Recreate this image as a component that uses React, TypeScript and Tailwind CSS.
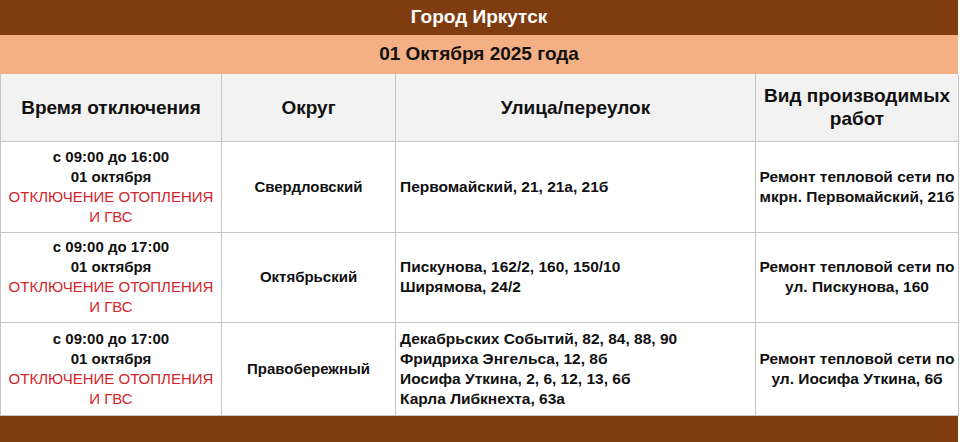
import React from 'react'

const rows = [
  {
    time: 'с 09:00 до 16:00',
    district: 'Свердловский',
    streets: ['Первомайский, 21, 21а, 21б'],
    work: ['Ремонт тепловой сети по', 'мкрн. Первомайский, 21б'],
    h: 'h-[91px]',
  },
  {
    time: 'с 09:00 до 17:00',
    district: 'Октябрьский',
    streets: ['Пискунова, 162/2, 160, 150/10', 'Ширямова, 24/2'],
    work: ['Ремонт тепловой сети по', 'ул. Пискунова, 160'],
    h: 'h-[90px]',
  },
  {
    time: 'с 09:00 до 17:00',
    district: 'Правобережный',
    streets: [
      'Декабрьских Событий, 82, 84, 88, 90',
      'Фридриха Энгельса, 12, 8б',
      'Иосифа Уткина, 2, 6, 12, 13, 6б',
      'Карла Либкнехта, 63а',
    ],
    work: ['Ремонт тепловой сети по', 'ул. Иосифа Уткина, 6б'],
    h: 'h-[93px]',
  },
]

export default function App() {
  return (
    <div className="w-[960px] h-[442px] bg-white overflow-hidden font-['Liberation_Sans',Arial,sans-serif] text-[#111]">
      <div className="w-[958px]">
        <div className="h-[35px] bg-[#7f3c10] flex items-center justify-center text-white font-bold text-[19px]">
          Город Иркутск
        </div>
        <div className="h-[39px] bg-[#f4b084] flex items-center justify-center font-bold text-[19px]">
          01 Октября 2025 года
        </div>
        <table className="table-fixed border-collapse w-[958px]">
          <colgroup>
            <col className="w-[221px]" />
            <col className="w-[174px]" />
            <col className="w-[360px]" />
            <col className="w-[203px]" />
          </colgroup>
          <thead>
            <tr className="h-[67px] bg-[#f2f2f2] text-[19px] font-bold leading-[23px]">
              <th className="border border-[#c4c4c4] border-t-0 font-bold">Время отключения</th>
              <th className="border border-[#c4c4c4] border-t-0 font-bold">Округ</th>
              <th className="border border-[#c4c4c4] border-t-0 font-bold">Улица/переулок</th>
              <th className="border border-[#c4c4c4] border-t-0 font-bold">
                Вид производимых
                <br />
                работ
              </th>
            </tr>
          </thead>
          <tbody className="leading-[20px]">
            {rows.map((r, i) => (
              <tr key={i} className={r.h}>
                <td className="border border-[#c4c4c4] text-center align-middle text-[15px]">
                  <div className="font-bold">{r.time}</div>
                  <div className="font-bold">01 октября</div>
                  <div className="text-[#d3262c]">ОТКЛЮЧЕНИЕ ОТОПЛЕНИЯ</div>
                  <div className="text-[#d3262c]">И ГВС</div>
                </td>
                <td className="border border-[#c4c4c4] text-center font-bold align-middle text-[15px]">
                  {r.district}
                </td>
                <td className="border border-[#c4c4c4] pl-[4px] font-bold align-middle text-[15.5px]">
                  {r.streets.map((s) => (
                    <div key={s}>{s}</div>
                  ))}
                </td>
                <td className="border border-[#c4c4c4] text-center font-bold align-middle text-[15.5px]">
                  {r.work.map((w) => (
                    <div key={w}>{w}</div>
                  ))}
                </td>
              </tr>
            ))}
          </tbody>
        </table>
        <div className="h-[27px] bg-[#7f3c10]" />
      </div>
    </div>
  )
}
